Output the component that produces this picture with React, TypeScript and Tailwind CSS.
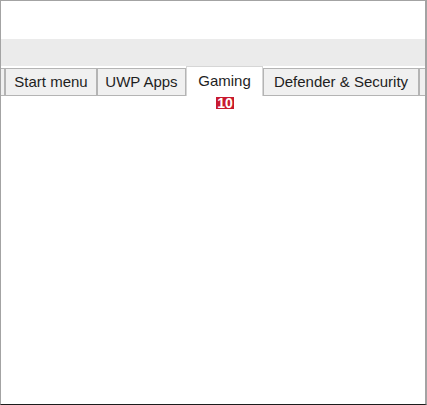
const tabs = [
  { label: "Start menu", w: "w-[92px]" },
  { label: "UWP Apps", w: "w-[89px]" },
  { label: "Gaming", w: "w-[77px]", active: true },
  { label: "Defender & Security", w: "w-[156px]" },
];

export default function App() {
  return (
    <div className="flex h-[405px] w-[427px] flex-col overflow-hidden border-t border-l border-r-2 border-b border-[#a3a3a3] border-b-[#1c1c1c] bg-white font-['Liberation_Sans',Arial,sans-serif] text-[15px] text-[#1e1e1e]">
      <div className="h-[38px] shrink-0" />
      <div className="h-[27px] shrink-0 bg-[#ebebeb]" />
      <div className="relative flex h-[30px] shrink-0 items-end">
        <div className="h-[28px] w-[4px] shrink-0 border-y border-r border-[#b4b4b4] bg-[#f0f0f0]" />
        {tabs.map((t) =>
          t.active ? (
            <div
              key={t.label}
              className={`${t.w} relative flex h-[30px] shrink-0 items-center justify-center border-x border-t border-[#d6d6d6] bg-white pb-px`}
            >
              {t.label}
              <span className="absolute top-[30px] left-[29px] flex h-[12px] w-[18px] items-center justify-center bg-[#c8192f] text-[14px] leading-none font-bold text-white">
                10
              </span>
            </div>
          ) : (
            <div
              key={t.label}
              className={`${t.w} flex h-[28px] shrink-0 items-center justify-center border border-[#b4b4b4] bg-[#f0f0f0]`}
            >
              {t.label}
            </div>
          ),
        )}
        <div className="h-[28px] w-[12px] shrink-0 border border-[#b4b4b4] bg-[#f0f0f0]" />
      </div>
      <div className="flex-1" />
    </div>
  );
}
